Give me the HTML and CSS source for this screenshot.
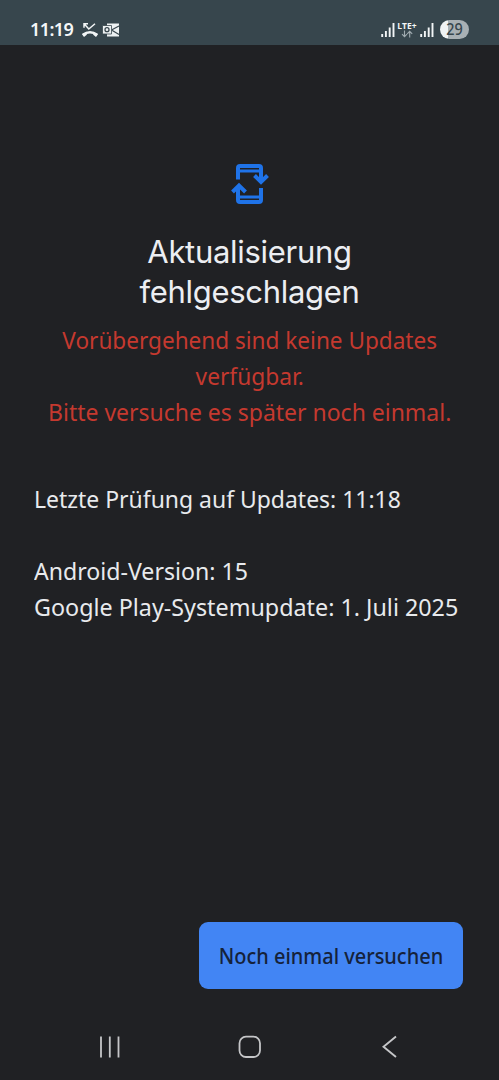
FILE: index.html
```
<!DOCTYPE html>
<html lang="de">
<head>
<meta charset="utf-8">
<title>Systemupdate</title>
<link rel="stylesheet" href="styles.css">
</head>
<body>
<div class="phone">
  <header class="status">
    <span class="clock">11:19</span>
    <svg class="missed" width="18" height="16" viewBox="0 0 18 16"><path d="M3 5.800V1.800h4M3.300 2l4.500 5L14 1.800" fill="none" stroke="#f2f5f6" stroke-width="1.500"/><path d="M1.800 12.800Q9 7.800 16.200 12.800" fill="none" stroke="#f2f5f6" stroke-width="2.400"/><path d="m1 12.200 4.800-2.500v3L3 15zM17 12.200l-4.800-2.500v3L15 15z" fill="#f2f5f6"/></svg>
    <svg class="mail" width="18" height="16" viewBox="0 0 18 16"><path d="M5 1.500h12v13H5z" fill="#edf1f2"/><path d="M9.500 8 17 4M9.500 8l7.500 4.500" stroke="#39474e" stroke-width="1.200"/><path d="M.5 3.500h9v8.500h-9z" fill="#edf1f2" stroke="#39474e" stroke-width=".8"/><circle cx="5" cy="7.700" r="2" fill="none" stroke="#39474e" stroke-width="1.300"/></svg>
    <span class="spacer"></span>
    <svg class="signal" width="14" height="14" viewBox="0 0 14 14"><path d="M1.200 11v3M4.900 8v6M8.700 4.500V14M12.500 0v14" stroke="#f2f5f6" stroke-width="1.900"/></svg>
    <span class="lte"><span class="lte-name">LTE+</span><svg width="12" height="8" viewBox="0 0 12 8"><path d="M3.500.5v6M1 4.200l2.500 2.500L6 4.200M8.700 7.500v-6M6.200 3.800l2.500-2.500 2.500 2.500" fill="none" stroke="#a0abb0" stroke-width="1.100"/></svg></span>
    <svg class="signal" width="14" height="14" viewBox="0 0 14 14"><path d="M1.200 11v3M4.900 8v6M8.700 4.500V14M12.500 0v14" stroke="#f2f5f6" stroke-width="1.900"/></svg>
    <span class="battery"><span>29</span></span>
  </header>
  <main class="content">
    <svg class="update-icon" width="38" height="42" viewBox="0 0 38 42" fill="none" stroke="#1f73e8" stroke-width="4"><path d="M7 16.500V5Q7 3 9 3h19q2 0 2 2v12"/><path d="M7 8h23" stroke-width="3"/><path d="m23.500 12.500 6.500 6.500 6.500-6.500"/><path d="M30 25v12q0 2-2 2H9q-2 0-2-2V23"/><path d="M7 34h23" stroke-width="3"/><path d="M1.500 29 8 22.500l6.500 6.500"/></svg>
    <h1 class="title">Aktualisierung<br>fehlgeschlagen</h1>
    <p class="error"><span class="e1">Vorübergehend sind keine Updates</span><span class="e2">verfügbar.</span><span class="e3">Bitte versuche es später noch einmal.</span></p>
    <div class="info">
      <p class="checked">Letzte Prüfung auf Updates: 11:18</p>
      <p class="version">Android-Version: 15</p>
      <p class="play">Google Play-Systemupdate: 1. Juli 2025</p>
    </div>
    <button class="retry"><span>Noch einmal versuchen</span></button>
  </main>
  <nav class="navbar">
    <svg width="24" height="24" viewBox="0 0 24 24"><path d="M4 1.500v21M12.800 1.500v21M21.500 1.500v21" stroke="#c5c6c8" stroke-width="1.800"/></svg>
    <svg width="24" height="24" viewBox="0 0 24 24"><rect x="1.500" y="1.700" width="20.500" height="20.300" rx="6.500" fill="none" stroke="#c5c6c8" stroke-width="1.800"/></svg>
    <svg width="24" height="24" viewBox="0 0 24 24"><path d="M18 1.400 5.500 11.700 18 22" fill="none" stroke="#c5c6c8" stroke-width="1.900"/></svg>
  </nav>
</div>
</body>
</html>
```
FILE: styles.css
```
* { box-sizing: border-box; }
body { margin: 0; background: #202124; font-family: "Noto Sans", sans-serif; }
.phone { width: 499px; height: 1080px; display: flex; flex-direction: column; overflow: hidden; background: #202124; }
.status { height: 45px; padding: 14px 30px 0; display: flex; align-items: center; background: #37464d; color: #f5f7f8; flex: none; }
.clock { font-size: 18px; font-weight: 600; letter-spacing: -0.6px; width: 51px; padding-bottom: 2px; white-space: nowrap; }
.missed { margin-right: 3px; }
.spacer { flex: 1; }
.lte { display: flex; flex-direction: column; align-items: center; width: 20px; margin: 0 3px 0 2px; padding-bottom: 1px; }
.lte-name { font: 700 8.5px/9px "Open Sans", sans-serif; }
.battery { width: 29px; height: 19px; margin-left: 6px; border-radius: 10px; background: linear-gradient(90deg, #f0f3f4 29%, #a8b0b4 29%); color: #37464d; font-size: 16px; line-height: 19px; font-weight: 500; text-align: center; }
.battery span { display: block; transform: scaleX(.9); }
.content { flex: 1; padding: 118px 34px 0; display: flex; flex-direction: column; align-items: center; }
.update-icon { flex: none; }
.title { margin: 27px 0 0; font: 400 31px/40px Inter, sans-serif; letter-spacing: -0.3px; color: #eceef2; text-align: center; white-space: nowrap; }
.error { margin: 10px 0 0; font-size: 24px; line-height: 36px; color: #c5392f; text-align: center; white-space: nowrap; }
.error span { display: block; }
.e1 { transform: scaleX(.94); }
.e2 { transform: scaleX(.947); }
.e3 { transform: scaleX(.957); }
.info { align-self: stretch; margin-top: 51px; font-size: 24px; line-height: 36px; color: #e8eaed; white-space: nowrap; }
.info p { margin: 0; transform-origin: 0 50%; }
.checked { transform: scaleX(.956); }
.version { transform: scaleX(.963); }
.play { transform: scaleX(.971); }
.info .version { margin-top: 36px; }
.retry { width: 264px; height: 67px; margin: auto 2px 25px auto; padding: 0 0 2px; border: 0; border-radius: 9px; background: #4285f4; color: #15223a; font: 500 22px "Noto Sans", sans-serif; white-space: nowrap; }
.retry span { display: block; transform: scaleX(.907); }
.navbar { height: 66px; padding: 0 97px; display: flex; justify-content: space-between; align-items: center; flex: none; }
```
